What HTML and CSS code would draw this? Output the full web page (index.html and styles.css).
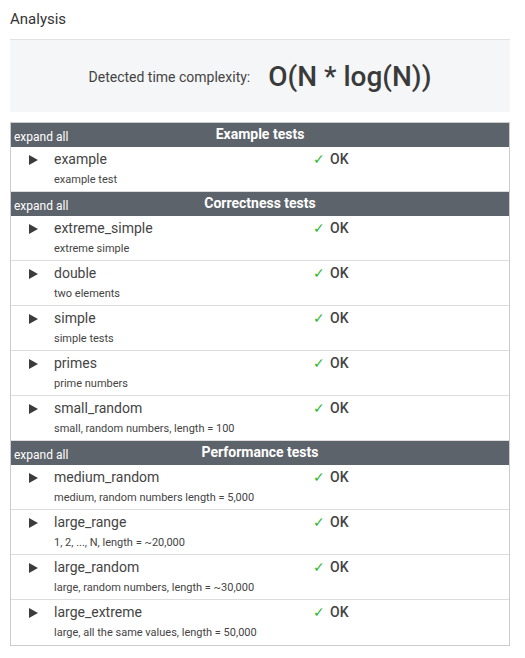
FILE: index.html
```html
<!DOCTYPE html>
<html>
<head>
<meta charset="utf-8">
<link rel="stylesheet" href="styles.css">
</head>
<body>
<div class="page">
  <h2 class="title">Analysis</h2>
  <div class="complexity">
    <span class="label">Detected time complexity:</span>
    <span class="value">O(N * log(N))</span>
  </div>
  <div class="tests">
    <div class="group">
      <span class="expand">expand all</span>
      <span class="gname">Example tests</span>
    </div>
    <div class="row">
      <span class="tri"></span>
      <div class="info"><div class="name">example</div><div class="desc">example test</div></div>
      <div class="res"><span class="check">✓</span>OK</div>
    </div>
    <div class="group">
      <span class="expand">expand all</span>
      <span class="gname">Correctness tests</span>
    </div>
    <div class="row">
      <span class="tri"></span>
      <div class="info"><div class="name">extreme_simple</div><div class="desc">extreme simple</div></div>
      <div class="res"><span class="check">✓</span>OK</div>
    </div>
    <div class="row">
      <span class="tri"></span>
      <div class="info"><div class="name">double</div><div class="desc">two elements</div></div>
      <div class="res"><span class="check">✓</span>OK</div>
    </div>
    <div class="row">
      <span class="tri"></span>
      <div class="info"><div class="name">simple</div><div class="desc">simple tests</div></div>
      <div class="res"><span class="check">✓</span>OK</div>
    </div>
    <div class="row">
      <span class="tri"></span>
      <div class="info"><div class="name">primes</div><div class="desc">prime numbers</div></div>
      <div class="res"><span class="check">✓</span>OK</div>
    </div>
    <div class="row">
      <span class="tri"></span>
      <div class="info"><div class="name">small_random</div><div class="desc">small, random numbers, length = 100</div></div>
      <div class="res"><span class="check">✓</span>OK</div>
    </div>
    <div class="group">
      <span class="expand">expand all</span>
      <span class="gname">Performance tests</span>
    </div>
    <div class="row">
      <span class="tri"></span>
      <div class="info"><div class="name">medium_random</div><div class="desc">medium, random numbers length = 5,000</div></div>
      <div class="res"><span class="check">✓</span>OK</div>
    </div>
    <div class="row">
      <span class="tri"></span>
      <div class="info"><div class="name">large_range</div><div class="desc">1, 2, ..., N, length = ~20,000</div></div>
      <div class="res"><span class="check">✓</span>OK</div>
    </div>
    <div class="row">
      <span class="tri"></span>
      <div class="info"><div class="name">large_random</div><div class="desc">large, random numbers, length = ~30,000</div></div>
      <div class="res"><span class="check">✓</span>OK</div>
    </div>
    <div class="row">
      <span class="tri"></span>
      <div class="info"><div class="name">large_extreme</div><div class="desc">large, all the same values, length = 50,000</div></div>
      <div class="res"><span class="check">✓</span>OK</div>
    </div>
  </div>
</div>
</body>
</html>
```
FILE: styles.css
```css
* { box-sizing: border-box; }
html, body { margin: 0; padding: 0; background: #fff; }
body { font-family: Roboto, "Liberation Sans", sans-serif; color: #333; }
.page { padding: 10px 15px 10px 10px; width: 525px; }
.title { margin: 0 0 11px 0; font-size: 15px; font-weight: 400; line-height: 18px; color: #333; }
.complexity {
  height: 73px;
  border-top: 1px solid #e1e2e4;
  background: #f5f6f8;
  display: flex;
  align-items: center;
  justify-content: center;
  gap: 18px;
  margin-bottom: 10px;
}
.complexity .label { font-size: 14px; color: #444; padding-top: 2px; }
.complexity .value { font-size: 28px; font-weight: 500; color: #3a3a3a; }
.tests { border: 1px solid #ccc; width: 500px; }
.group {
  background: #5d636b;
  color: #fff;
  height: 24px;
  display: flex;
  align-items: center;
  position: relative;
}
.expand { font-size: 12px; padding-left: 3px; padding-top: 3px; }
.gname {
  position: absolute;
  left: 0; right: 0; top: 0;
  text-align: center;
  font-size: 14px;
  font-weight: 700;
  line-height: 22px;
  pointer-events: none;
}
.row {
  display: grid;
  grid-template-columns: 43px 259px 1fr;
  height: 45px;
  border-bottom: 1px solid #ddd;
  align-items: start;
}
.row:last-child { border-bottom: none; height: 45px; }
.tri {
  margin: 8px 0 0 18px;
  width: 0; height: 0;
  border-top: 5px solid transparent;
  border-bottom: 5px solid transparent;
  border-left: 9px solid #3c3c3c;
}
.info { padding-top: 4px; }
.name { font-size: 14px; line-height: 17px; color: #444; }
.desc { font-size: 11px; line-height: 13px; margin-top: 5px; color: #444; }
.res { padding-top: 4px; font-size: 14px; line-height: 17px; font-weight: 500; color: #444; }
.check { color: #2eb82e; font-size: 14px; margin-right: 5px; font-weight: 400; }
```
